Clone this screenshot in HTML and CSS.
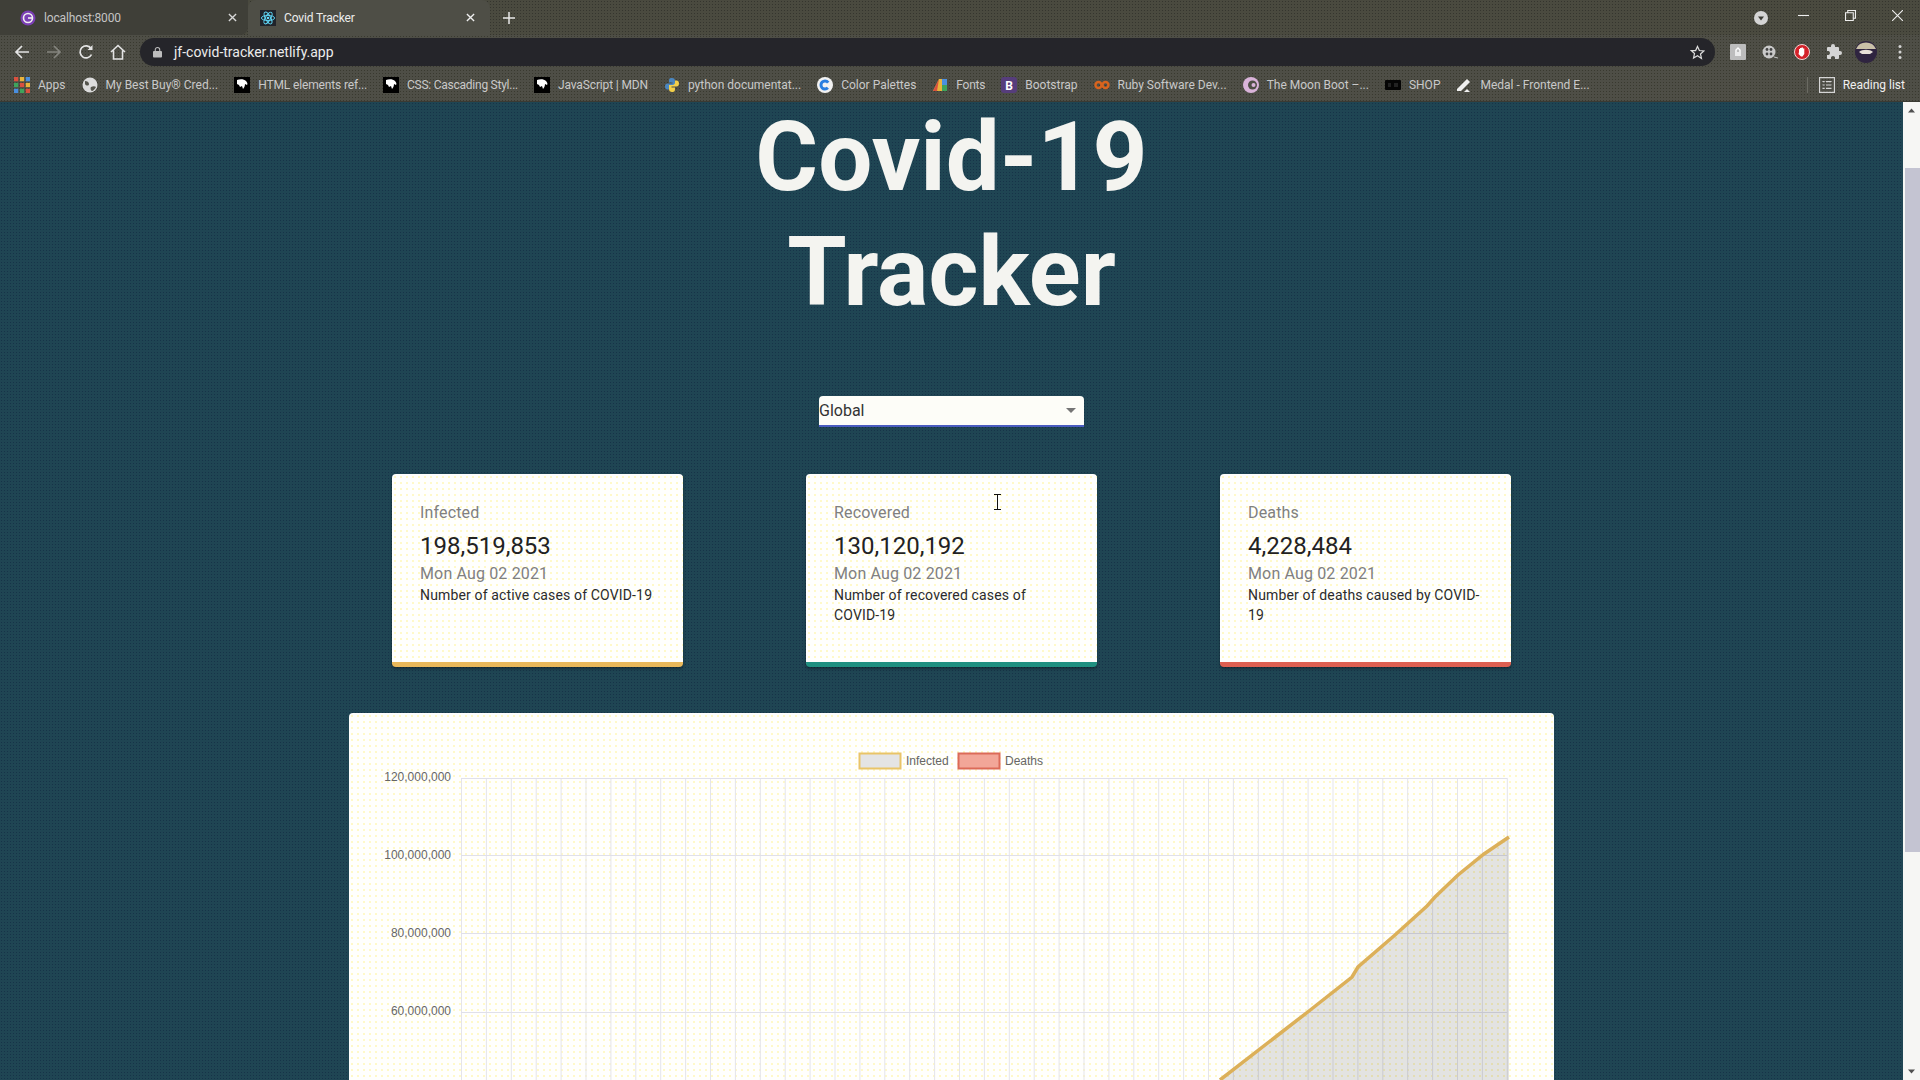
FILE: index.html
```html
<!DOCTYPE html>
<html lang="en">
  <head>
    <meta charset="UTF-8" />
    <title>Covid Tracker</title>
    <link rel="stylesheet" href="styles.css">
  </head>
  <body>
    <svg class="defs" width="0" height="0">
      <symbol id="mdn" viewBox="0 0 16 16">
        <rect width="16" height="16" fill="#000" />
        <path d="M3 3c3-1 7-1 9 1 1 1 2 3 1 4l-2-1c0 2-1 4-2 5l-1-3-2 1-1-2-2-1z" fill="#fff" />
      </symbol>
    </svg>

    <!-- browser frame -->
    <div class="tabstrip">
      <div class="tab tab-inactive">
        <svg class="ico" viewBox="0 0 16 16"><circle cx="8" cy="8" r="7.5" fill="#7b3fb5" /><circle cx="8" cy="8" r="4.5" fill="none" stroke="#eee" stroke-width="1.6" /><path d="M8 8h5" stroke="#eee" stroke-width="1.6" /></svg>
        <span class="tab-title">localhost:8000</span>
        <svg class="tab-close" viewBox="0 0 10 10"><path d="M1 1l8 8M9 1l-8 8" stroke="#d8d8d8" stroke-width="1.5" /></svg>
      </div>
      <div class="tab tab-active">
        <svg class="ico" viewBox="0 0 16 16"><rect width="16" height="16" fill="#20232a" /><g fill="none" stroke="#61dafb" stroke-width=".9"><ellipse cx="8" cy="8" rx="6.6" ry="2.6" /><ellipse cx="8" cy="8" rx="6.6" ry="2.6" transform="rotate(60 8 8)" /><ellipse cx="8" cy="8" rx="6.6" ry="2.6" transform="rotate(120 8 8)" /></g><circle cx="8" cy="8" r="1.3" fill="#61dafb" /></svg>
        <span class="tab-title tab-title-on">Covid Tracker</span>
        <svg class="tab-close" viewBox="0 0 10 10"><path d="M1 1l8 8M9 1l-8 8" stroke="#f0f0f0" stroke-width="1.5" /></svg>
      </div>
      <svg class="newtab" viewBox="0 0 12 12"><path d="M6 0v12M0 6h12" stroke="#e8e8e8" stroke-width="1.5" /></svg>
      <svg class="tab-search" viewBox="0 0 16 16"><circle cx="8" cy="8" r="7" fill="#d5d5d5" /><path d="M5 6.5h6l-3 4z" fill="#3c3c36" /></svg>
      <div class="winctl">
        <svg viewBox="0 0 10 10"><path d="M0 5h10" stroke="#eee" /></svg>
        <svg viewBox="0 0 10 10"><path d="M.5 2.5h7v7h-7zM2.5 2.5v-2h7v7h-2" fill="none" stroke="#eee" /></svg>
        <svg viewBox="0 0 10 10"><path d="M0 0l10 10M10 0l-10 10" stroke="#eee" /></svg>
      </div>
    </div>

    <div class="toolbar">
      <svg class="nav" viewBox="0 0 16 16"><path d="M15 8H2M8 2L2 8l6 6" fill="none" stroke="#e4e4e4" stroke-width="1.7" /></svg>
      <svg class="nav" viewBox="0 0 16 16"><path d="M1 8h13M8 2l6 6-6 6" fill="none" stroke="#85857f" stroke-width="1.7" /></svg>
      <svg class="nav" viewBox="0 0 16 16"><path d="M13.5 10.5A6 6 0 1 1 13 4.5" fill="none" stroke="#e4e4e4" stroke-width="1.7" /><path d="M14.5 1v5h-5z" fill="#e4e4e4" /></svg>
      <svg class="nav" viewBox="0 0 16 16"><path d="M1 8l7-6.5L15 8M3.5 6.5V15h9V6.5" fill="none" stroke="#e4e4e4" stroke-width="1.6" /></svg>
      <div class="omnibox">
        <svg class="lock" viewBox="0 0 10 12"><path d="M2.5 5V3.5a2.5 2.5 0 0 1 5 0V5" fill="none" stroke="#bdbdbd" stroke-width="1.2" /><rect y="5" width="10" height="7" rx="1" fill="#bdbdbd" /></svg>
        <span class="url">jf-covid-tracker.netlify.app</span>
        <svg class="star" viewBox="0 0 16 16"><path d="M8 1.5l2 4.4 4.8.5-3.6 3.2 1 4.7L8 11.4l-4.2 2.4 1-4.7-3.6-3.2L6 5.9z" fill="none" stroke="#dedede" stroke-width="1.3" /></svg>
      </div>
      <div class="extensions">
        <svg class="ext" viewBox="0 0 16 16"><rect width="16" height="16" rx="1" fill="#bdbdbd" /><path d="M6 12V6l2-2 2 2v6M8 8v4" fill="none" stroke="#fff" stroke-width="1.4" /></svg>
        <svg class="ext" viewBox="0 0 16 16"><circle cx="7" cy="8" r="6.5" fill="#c9c9c9" /><circle cx="5" cy="5.5" r="1.4" fill="#444" /><circle cx="9" cy="5.5" r="1.4" fill="#444" /><circle cx="5" cy="10" r="1.4" fill="#444" /><circle cx="9" cy="10" r="1.4" fill="#444" /><path d="M12 13l4 1" stroke="#c9c9c9" /></svg>
        <svg class="ext" viewBox="0 0 16 16"><circle cx="8" cy="8" r="7.5" fill="#d3222a" stroke="#f2d6d6" stroke-width="1" /><path d="M5 8V5h1v2-3h1.500v3-3.500H9V7V4.500h1.300V10L8.500 12.500H7L4.500 10z" fill="#fff" /></svg>
        <svg class="ext" viewBox="0 0 16 16"><path d="M14 7h-1V4a1 1 0 0 0-1-1H9V2a2 2 0 0 0-4 0v1H2a1 1 0 0 0-1 1v3h1a2 2 0 0 1 0 4H1v3a1 1 0 0 0 1 1h3v-1a2 2 0 0 1 4 0v1h3a1 1 0 0 0 1-1v-3h1a2 2 0 0 0 0-4z" fill="#d5d5d5" /></svg>
        <svg class="avatar" viewBox="0 0 22 22"><circle cx="11" cy="11" r="11" fill="#2f2440" /><path d="M1 8a11 11 0 0 1 20 0z" fill="#c9c0a8" /><path d="M4 11c3-3 11-3 14 0l-3 2H7z" fill="#e8e0d8" /></svg>
        <svg class="ext kebab" viewBox="0 0 4 16"><circle cx="2" cy="2.500" r="1.500" fill="#d5d5d5" /><circle cx="2" cy="8" r="1.500" fill="#d5d5d5" /><circle cx="2" cy="13.500" r="1.500" fill="#d5d5d5" /></svg>
      </div>
    </div>

    <div class="bookmarks">
      <div class="bm">
        <svg class="ico" viewBox="0 0 15 15"><path d="M0 0h4v4H0z" fill="#d9503f" /><path d="M5.500 0h4v4h-4z" fill="#e8b33c" /><path d="M11 0h4v4h-4z" fill="#4a8fe0" /><path d="M0 5.500h4v4H0z" fill="#3fa35c" /><path d="M5.500 5.500h4v4h-4z" fill="#d9503f" /><path d="M11 5.500h4v4h-4z" fill="#e8b33c" /><path d="M0 11h4v4H0z" fill="#4a8fe0" /><path d="M5.500 11h4v4h-4z" fill="#3fa35c" /><path d="M11 11h4v4h-4z" fill="#d9503f" /></svg>
        <span class="bm-text">Apps</span>
      </div>
      <div class="bm">
        <svg class="ico" viewBox="0 0 16 16"><circle cx="8" cy="8" r="7.500" fill="#dcdcdc" /><path d="M3 4c2 0 4 1 4 3S4 9 3 7zM9 10c2-1 4-1 5 0-1 2-3 4-4 4s-2-3-1-4z" fill="#55554d" /></svg>
        <span class="bm-text">My Best Buy® Cred...</span>
      </div>
      <div class="bm"><svg class="ico"><use href="#mdn" /></svg><span class="bm-text bm-tight">HTML elements ref...</span></div>
      <div class="bm"><svg class="ico"><use href="#mdn" /></svg><span class="bm-text bm-tighter">CSS: Cascading Styl...</span></div>
      <div class="bm"><svg class="ico"><use href="#mdn" /></svg><span class="bm-text bm-tight">JavaScript | MDN</span></div>
      <div class="bm">
        <svg class="ico" viewBox="0 0 16 16"><path d="M8 1C5 1 5 2.500 5 4v1.500h3.500V6.500H3.500C2 6.500 1 7.500 1 9.500s1 3 2.500 3H5v-2c0-1.300 1-2.500 2.500-2.500H11V4c0-2-1-3-3-3z" fill="#4a86c0" /><path d="M8 15c3 0 3-1.500 3-3v-1.500H7.500v-1h5c1.500 0 2.500-1 2.500-3s-1-3-2.500-3H11v2c0 1.300-1 2.500-2.500 2.500H5V12c0 2 1 3 3 3z" fill="#f2cf4a" /></svg>
        <span class="bm-text">python documentat...</span>
      </div>
      <div class="bm">
        <svg class="ico" viewBox="0 0 16 16"><circle cx="8" cy="8" r="8" fill="#f2f2f2" /><circle cx="8" cy="8" r="4" fill="none" stroke="#2a7fe0" stroke-width="3" stroke-dasharray="19 6" stroke-dashoffset="-3" /></svg>
        <span class="bm-text">Color Palettes</span>
      </div>
      <div class="bm">
        <svg class="ico" viewBox="0 0 16 16"><path d="M1 14L7 2h3v12z" fill="#e8b33c" /><path d="M7 2L1 14h4z" fill="#d9503f" /><path d="M10 2h5v6h-5z" fill="#4a8fe0" /><path d="M10 8h5v6h-5z" fill="#3fa35c" /></svg>
        <span class="bm-text bm-tighter">Fonts</span>
      </div>
      <div class="bm">
        <svg class="ico" viewBox="0 0 16 16"><rect width="16" height="16" rx="3" fill="#563d7c" /><text class="bs-letter" x="8" y="12.500" text-anchor="middle">B</text></svg>
        <span class="bm-text">Bootstrap</span>
      </div>
      <div class="bm">
        <svg class="ico" viewBox="0 0 16 16"><circle cx="4.500" cy="8" r="3" fill="none" stroke="#d8641e" stroke-width="2.400" /><circle cx="11.500" cy="8" r="3" fill="none" stroke="#d8641e" stroke-width="2.400" /></svg>
        <span class="bm-text">Ruby Software Dev...</span>
      </div>
      <div class="bm">
        <svg class="ico" viewBox="0 0 16 16"><circle cx="8" cy="8" r="8" fill="#d9b3d9" /><circle cx="9.500" cy="8" r="4.500" fill="#4e4e45" /><circle cx="10.500" cy="8" r="2" fill="#d9b3d9" /></svg>
        <span class="bm-text">The Moon Boot –...</span>
      </div>
      <div class="bm">
        <svg class="ico" viewBox="0 0 16 16"><rect y="3" width="16" height="10" rx="1" fill="#050505" /><path d="M3 6h3v4H3zM9 6h4v4H9z" fill="#222" /></svg>
        <span class="bm-text">SHOP</span>
      </div>
      <div class="bm">
        <svg class="ico" viewBox="0 0 16 16"><path d="M1 12L11 2l3 3L5 14H1z" fill="#f0f0f0" /><path d="M8 15h6l-3-3z" fill="#f0f0f0" /></svg>
        <span class="bm-text">Medal - Frontend E...</span>
      </div>
      <div class="reading">
        <svg class="ico" viewBox="0 0 14 14"><path d="M.5.500h13v13H.5z" fill="none" stroke="#d5d5d5" /><path d="M3 4h2M6 4h5M3 7h2M6 7h5M3 10h2M6 10h5" stroke="#d5d5d5" /></svg>
        <span class="reading-text">Reading list</span>
      </div>
    </div>

    <!-- page -->
    <div class="viewport">
      <main class="page">
        <h1 class="title">Covid-19<br />Tracker</h1>

        <div class="picker">
          <span>Global</span>
          <svg class="caret" viewBox="0 0 10 5"><path d="M0 0h10L5 5z" fill="#757575" /></svg>
        </div>

        <section class="cards">
          <div class="card card-infected">
            <div class="card-label">Infected</div>
            <div class="card-number">198,519,853</div>
            <div class="card-date">Mon Aug 02 2021</div>
            <div class="card-note">Number of active cases of COVID-19</div>
          </div>
          <div class="card card-recovered">
            <div class="card-label">Recovered</div>
            <div class="card-number">130,120,192</div>
            <div class="card-date">Mon Aug 02 2021</div>
            <div class="card-note">Number of recovered cases of COVID-19</div>
          </div>
          <div class="card card-deaths">
            <div class="card-label">Deaths</div>
            <div class="card-number">4,228,484</div>
            <div class="card-date">Mon Aug 02 2021</div>
            <div class="card-note">Number of deaths caused by COVID-19</div>
          </div>
        </section>

        <section class="chart-card">
          <svg class="chart" width="1205" height="367" viewBox="0 0 1205 367">
            <defs>
              <pattern id="vgrid" x="112" y="0" width="24.9" height="10" patternUnits="userSpaceOnUse">
                <rect width="1" height="10" fill="#e4e4ea" />
              </pattern>
            </defs>

            <rect x="510.500" y="40.500" width="41" height="15" fill="#e4e4e4" stroke="#e9c468" stroke-width="2" />
            <text class="legend" x="557" y="52">Infected</text>
            <rect x="609.500" y="40.500" width="41" height="15" fill="#f2a698" stroke="#dc6a58" stroke-width="2" />
            <text class="legend" x="656" y="52">Deaths</text>

            <rect x="112" y="65" width="1047" height="302" fill="url(#vgrid)" />
            <path d="M112 65.500h1046M112 142.500h1046M112 220.500h1046M112 299.500h1046" stroke="#e0e0ea" />

            <text class="tick" x="102" y="68">120,000,000</text>
            <text class="tick" x="102" y="146">100,000,000</text>
            <text class="tick" x="102" y="224">80,000,000</text>
            <text class="tick" x="102" y="302">60,000,000</text>

            <path d="M1160 124L1135 141 1109 162 1086 184 1078 193 1046 222 1009 254 1003 264 960 298 929 322 871 367H1160z" fill="#000" fill-opacity=".11" />
            <path d="M1160 124L1135 141 1109 162 1086 184 1078 193 1046 222 1009 254 1003 264 960 298 929 322 871 367" fill="none" stroke="#dcb059" stroke-width="3.5" />
          </svg>
        </section>
      </main>

      <div class="scrollbar">
        <svg class="sb-arrow" viewBox="0 0 17 17"><path d="M5 10.500h7L8.500 6.500z" fill="#505050" /></svg>
        <div class="sb-thumb"></div>
        <div class="sb-rest"></div>
        <svg class="sb-arrow" viewBox="0 0 17 17"><path d="M5 6.500h7l-3.500 4z" fill="#505050" /></svg>
      </div>

      <svg class="ibeam" viewBox="0 0 7 16"><path d="M0 .5h7M0 15.500h7M3.500 .5v15" fill="none" stroke="#111" /></svg>
    </div>
  </body>
</html>
```

FILE: styles.css
```css
* {
  box-sizing: border-box;
}
html,
body {
  height: 100%;
}
body {
  display: flex;
  flex-direction: column;
  margin: 0;
  overflow: hidden;
  font-family: Roboto, Arial, sans-serif;
  background-color: #1f4553;
}
.defs {
  position: absolute;
}
.ico {
  flex: none;
  width: 16px;
  height: 16px;
}

/* browser frame */
.tabstrip {
  display: flex;
  align-items: center;
  flex: none;
  height: 35px;
  background-color: #4a4a3f;
  background-image: radial-gradient(#35352e 0.8px, transparent 1px);
  background-size: 3px 3px;
}
.tab {
  display: flex;
  align-items: center;
  align-self: stretch;
  font-size: 12px;
  letter-spacing: -0.15px;
}
.tab-inactive {
  width: 248px;
  padding-left: 20px;
  background-color: #3f3f38;
  border-bottom-right-radius: 8px;
}
.tab-active {
  width: 242px;
  padding-left: 12px;
  background-color: #4e4e46;
  border-radius: 8px 8px 0 0;
}
.tab-title {
  width: 184px;
  margin-left: 8px;
  color: #c4c4c4;
}
.tab-title-on {
  width: 182px;
  color: #ececec;
}
.tab-close {
  width: 9px;
  height: 9px;
}
.newtab {
  width: 12px;
  height: 12px;
  margin-left: 13px;
}
.tab-search {
  width: 16px;
  height: 16px;
  margin-left: auto;
}
.winctl {
  display: flex;
  align-items: center;
  gap: 36px;
  padding: 0 17px 5px 29px;
}
.winctl svg {
  width: 11px;
  height: 11px;
}
.toolbar {
  display: flex;
  align-items: center;
  flex: none;
  height: 34px;
  padding-left: 14px;
  background-color: #4e4e46;
  background-image: radial-gradient(#39392f 0.8px, transparent 1px);
  background-size: 3px 3px;
}
.nav {
  flex: none;
  width: 16px;
  height: 16px;
  margin-right: 16px;
}
.omnibox {
  display: flex;
  align-items: center;
  width: 1575px;
  height: 28px;
  margin-left: -2px;
  padding: 0 10px 0 13px;
  border-radius: 14px;
  background-color: #25252a;
}
.lock {
  width: 9px;
  height: 12px;
}
.url {
  margin-left: 12px;
  font-size: 14px;
  color: #ececec;
}
.star {
  width: 15px;
  height: 15px;
  margin-left: auto;
}
.extensions {
  display: flex;
  align-items: center;
  margin-left: 15px;
}
.ext {
  width: 16px;
  height: 16px;
  margin-right: 16px;
}
.avatar {
  width: 22px;
  height: 22px;
  margin: 0 21px 0 -3px;
}
.kebab {
  width: 4px;
  margin-right: 0;
}
.bookmarks {
  display: flex;
  align-items: center;
  gap: 16px;
  flex: none;
  height: 33px;
  padding: 0 0 1px 14px;
  background-color: #4e4e46;
  background-image: radial-gradient(#39392f 0.8px, transparent 1px);
  background-size: 3px 3px;
  border-bottom: 1px solid #3a3a33;
}
.bm {
  display: flex;
  align-items: center;
  gap: 8px;
}
.bm-text {
  font-size: 12px;
  color: #c9c9c9;
  white-space: nowrap;
}
.bm-tight {
  letter-spacing: -0.14px;
}
.bm-tighter {
  letter-spacing: -0.25px;
}
.bs-letter {
  font: 700 12px Roboto, sans-serif;
  fill: #fff;
}
.reading {
  display: flex;
  align-items: center;
  gap: 8px;
  height: 16px;
  margin-left: auto;
  padding: 0 15px 0 11px;
  border-left: 1px solid #6a6a62;
}
.reading-text {
  font-size: 12px;
  color: #f0f0f0;
}

/* page */
.viewport {
  position: relative;
  display: flex;
  flex: 1;
  min-height: 0;
}
.page {
  display: flex;
  flex-direction: column;
  align-items: center;
  flex: 1;
  min-width: 0;
  overflow: hidden;
  background-image: radial-gradient(#163348 0.8px, transparent 1px);
  background-size: 3px 3px;
}
.title {
  margin: -2px 0 66px;
  font-size: 96px;
  font-weight: 700;
  line-height: 115px;
  text-align: center;
  color: #f4f4f0;
}
.picker {
  display: flex;
  align-items: center;
  justify-content: space-between;
  flex: none;
  width: 265px;
  height: 31px;
  padding-right: 8px;
  font-size: 16px;
  color: #333;
  background-color: #fdfdf8;
  border-bottom: 2px solid #4a5cc0;
  border-radius: 4px 4px 0 0;
}
.caret {
  width: 10px;
  height: 5px;
}
.cards {
  display: flex;
  gap: 123px;
  flex: none;
  margin-top: 47px;
}
.card {
  width: 291px;
  height: 193px;
  padding: 27px 28px 0;
  background-color: #fffffd;
  background-image: radial-gradient(#fff9c8 0.7px, transparent 1px);
  background-size: 6px 6px;
  border-bottom: 5px solid #000;
  border-radius: 4px;
  box-shadow: 0 2px 3px rgba(0, 0, 0, 0.3);
}
.card-infected {
  border-bottom-color: #e9b85a;
}
.card-recovered {
  border-bottom-color: #1f9080;
}
.card-deaths {
  border-bottom-color: #dd5f50;
}
.card-label {
  margin-bottom: 5px;
  font-size: 16px;
  line-height: 24px;
  letter-spacing: 0.15px;
  color: #808080;
}
.card-number {
  font-size: 24px;
  line-height: 32px;
  color: #222;
}
.card-date {
  font-size: 16px;
  line-height: 23px;
  letter-spacing: 0.15px;
  color: #808080;
}
.card-note {
  font-size: 14px;
  line-height: 20px;
  letter-spacing: 0.15px;
  color: #2b2b2b;
}
.chart-card {
  flex: none;
  width: 1205px;
  height: 600px;
  margin-top: 46px;
  background-color: #fffffd;
  background-image: radial-gradient(#fff9c8 0.7px, transparent 1px);
  background-size: 6px 6px;
  border-radius: 4px;
}
.chart {
  display: block;
}
.legend,
.tick {
  font: 12px "Liberation Sans", Arial, sans-serif;
  fill: #666;
}
.tick {
  text-anchor: end;
}
.scrollbar {
  display: flex;
  flex-direction: column;
  flex: none;
  width: 17px;
  background-color: #f6f6f4;
}
.sb-arrow {
  flex: none;
  width: 17px;
  height: 17px;
}
.sb-thumb {
  flex: none;
  height: 684px;
  margin: 49px 0 0 2px;
  background-color: #c4c4d2;
}
.sb-rest {
  flex: 1;
}
.ibeam {
  position: absolute;
  left: 994px;
  top: 392px;
  width: 7px;
  height: 16px;
}
```
